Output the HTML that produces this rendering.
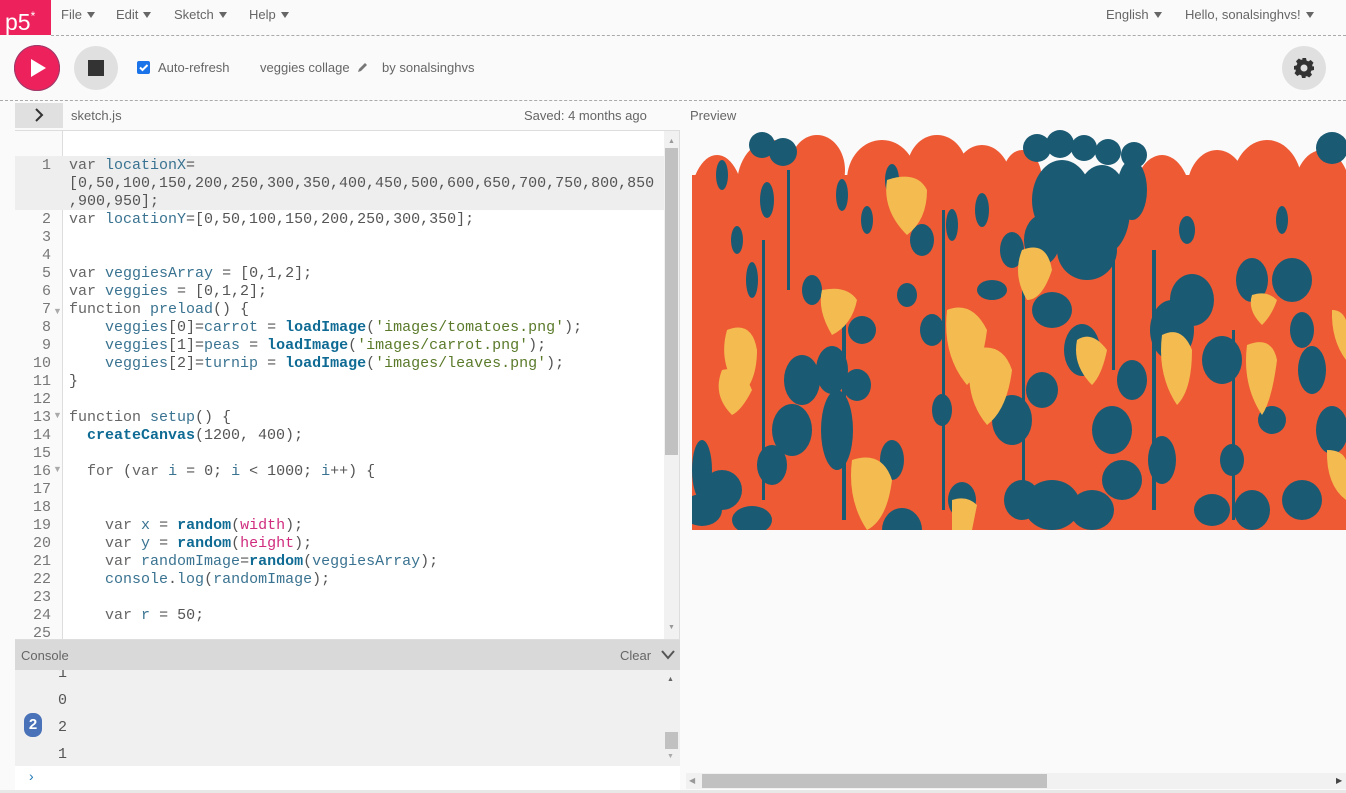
<!DOCTYPE html>
<html><head><meta charset="utf-8">
<style>
*{margin:0;padding:0;box-sizing:border-box}
body{width:1346px;height:793px;overflow:hidden;background:#fafafa;font-family:"Liberation Sans",sans-serif;color:#666;position:relative}
.a{position:absolute}
.nav{font-size:13px;color:#666}
.tri{display:inline-block;width:0;height:0;border-left:4px solid transparent;border-right:4px solid transparent;border-top:6px solid #666;margin-left:5px;vertical-align:1px}
.dash{border-top:1px dashed #aaa;height:0}
.code{font-family:"Liberation Mono",monospace;font-size:15px;line-height:18px;white-space:pre;color:#555}
.k{color:#666}.v{color:#3a7391}.f{color:#0f6b94;font-weight:bold}.s{color:#5a7a2a}.p{color:#d02c7e}
.gut{font-family:"Liberation Mono",monospace;font-size:15px;line-height:18px;color:#777;text-align:right;white-space:pre}
</style></head><body>
<div class="a" style="left:0;top:0;width:51px;height:35px;background:#ed225d;color:#fff;font-size:23px;line-height:33px;padding-left:5px">p5<sup style="font-size:12px;vertical-align:10px">*</sup></div>
<div class="a nav" style="left:61px;top:7px">File<span class="tri"></span></div>
<div class="a nav" style="left:116px;top:7px">Edit<span class="tri"></span></div>
<div class="a nav" style="left:174px;top:7px">Sketch<span class="tri"></span></div>
<div class="a nav" style="left:249px;top:7px">Help<span class="tri"></span></div>
<div class="a nav" style="left:1106px;top:7px">English<span class="tri"></span></div>
<div class="a nav" style="left:1185px;top:7px">Hello, sonalsinghvs!<span class="tri"></span></div>
<div class="a dash" style="left:51px;top:35px;width:1295px"></div>
<div class="a" style="left:14px;top:45px;width:46px;height:46px;border-radius:50%;background:#ed225d;box-shadow:0 0 0 1px #9a3b6a inset"></div>
<div class="a" style="left:31px;top:59px;width:0;height:0;border-top:9px solid transparent;border-bottom:9px solid transparent;border-left:15px solid #fff"></div>
<div class="a" style="left:74px;top:46px;width:44px;height:44px;border-radius:50%;background:#e0e0e0"></div>
<div class="a" style="left:88px;top:60px;width:16px;height:16px;background:#333"></div>
<div class="a" style="left:137px;top:61px;width:13px;height:13px;border-radius:2px;background:#1a73e8"></div>
<svg class="a" style="left:137px;top:61px" width="13" height="13"><path d="M3 6.5l2.5 2.5 5-5" stroke="#fff" stroke-width="2" fill="none"/></svg>
<div class="a nav" style="left:158px;top:60px">Auto-refresh</div>
<div class="a nav" style="left:260px;top:60px">veggies collage</div>
<svg class="a" style="left:357px;top:62px" width="11" height="11"><path d="M1 10l1-3 6-6 2 2-6 6z" fill="#777"/></svg>
<div class="a nav" style="left:382px;top:60px">by sonalsinghvs</div>
<div class="a" style="left:1282px;top:46px;width:44px;height:44px;border-radius:50%;background:#e0e0e0"></div>
<svg class="a" style="left:1292px;top:56px" width="24" height="24" viewBox="0 0 24 24"><path fill="#333" d="M10 2h4l.6 2.6 1.8.8 2.3-1.4 2.8 2.8-1.4 2.3.8 1.8L22 10v4l-2.6.6-.8 1.8 1.4 2.3-2.8 2.8-2.3-1.4-1.8.8L14 22h-4l-.6-2.6-1.8-.8-2.3 1.4-2.8-2.8 1.4-2.3-.8-1.8L2 14v-4l2.6-.6.8-1.8-1.4-2.3 2.8-2.8 2.3 1.4 1.8-.8z M12 8.5a3.5 3.5 0 1 0 0 7a3.5 3.5 0 1 0 0-7z" fill-rule="evenodd"/></svg>
<div class="a dash" style="left:0;top:100px;width:1346px"></div>
<div class="a" style="left:15px;top:103px;width:48px;height:25px;background:#e0e0e0"></div>
<svg class="a" style="left:33px;top:108px" width="12" height="14"><path d="M3 1l6 6-6 6" stroke="#333" stroke-width="2" fill="none"/></svg>
<div class="a nav" style="left:71px;top:108px">sketch.js</div>
<div class="a nav" style="left:524px;top:108px">Saved: 4 months ago</div>
<div class="a nav" style="left:690px;top:108px">Preview</div>
<div class="a" style="left:15px;top:130px;width:665px;height:510px;background:#fff;border:1px solid #ddd"></div>
<div class="a" style="left:15px;top:131px;width:48px;height:508px;background:#fafafa;border-right:1px solid #ddd"></div>
<div class="a" style="left:15px;top:156px;width:649px;height:54px;background:#eee"></div>
<div class="a gut" style="left:15px;top:157px;width:36px">1


2
3
4
5
6
7
8
9
10
11
12
13
14
15
16
17
18
19
20
21
22
23
24
25</div>
<div class="a" style="left:53px;top:302px;color:#aaa;font-size:9px;line-height:18px">▼</div>
<div class="a" style="left:53px;top:410px;color:#aaa;font-size:9px">▼</div>
<div class="a" style="left:53px;top:464px;color:#aaa;font-size:9px">▼</div>
<div class="a code" style="left:69px;top:157px;width:595px;height:482px;overflow:hidden"><span class="k">var</span> <span class="v">locationX</span>=
[0,50,100,150,200,250,300,350,400,450,500,600,650,700,750,800,850
,900,950];
<span class="k">var</span> <span class="v">locationY</span>=[0,50,100,150,200,250,300,350];


<span class="k">var</span> <span class="v">veggiesArray</span> = [0,1,2];
<span class="k">var</span> <span class="v">veggies</span> = [0,1,2];
<span class="k">function</span> <span class="v">preload</span>() {
    <span class="v">veggies</span>[0]=<span class="v">carrot</span> = <span class="f">loadImage</span>(<span class="s">'images/tomatoes.png'</span>);
    <span class="v">veggies</span>[1]=<span class="v">peas</span> = <span class="f">loadImage</span>(<span class="s">'images/carrot.png'</span>);
    <span class="v">veggies</span>[2]=<span class="v">turnip</span> = <span class="f">loadImage</span>(<span class="s">'images/leaves.png'</span>);
}

<span class="k">function</span> <span class="v">setup</span>() {
  <span class="f">createCanvas</span>(1200, 400);

  <span class="k">for</span> (<span class="k">var</span> <span class="v">i</span> = 0; <span class="v">i</span> &lt; 1000; <span class="v">i</span>++) {


    <span class="k">var</span> <span class="v">x</span> = <span class="f">random</span>(<span class="p">width</span>);
    <span class="k">var</span> <span class="v">y</span> = <span class="f">random</span>(<span class="p">height</span>);
    <span class="k">var</span> <span class="v">randomImage</span>=<span class="f">random</span>(<span class="v">veggiesArray</span>);
    <span class="v">console</span>.<span class="v">log</span>(<span class="v">randomImage</span>);

    <span class="k">var</span> <span class="v">r</span> = 50;</div>
<div class="a" style="left:664px;top:131px;width:15px;height:508px;background:#f1f1f1"></div>
<div class="a" style="left:665px;top:148px;width:13px;height:307px;background:#c1c1c1"></div>
<div class="a" style="left:668px;top:138px;color:#999;font-size:7px">▲</div>
<div class="a" style="left:668px;top:624px;color:#999;font-size:7px">▼</div>
<div class="a" style="left:15px;top:640px;width:665px;height:30px;background:#d9d9d9"></div>
<div class="a nav" style="left:21px;top:648px">Console</div>
<div class="a nav" style="left:620px;top:648px">Clear</div>
<svg class="a" style="left:660px;top:649px" width="16" height="12"><path d="M2 2l6 7 6-7" stroke="#555" stroke-width="2" fill="none"/></svg>
<div class="a" style="left:15px;top:670px;width:665px;height:96px;background:#f0f0f0;overflow:hidden"></div>
<div class="a code" style="left:58px;top:660px;color:#555;font-size:15px;line-height:27px">1
0
2
1</div>
<div class="a" style="left:15px;top:664px;width:665px;height:6px;background:#d9d9d9"></div>
<div class="a" style="left:24px;top:713px;width:18px;height:24px;border-radius:8px;background:#4a72b8;color:#fff;font-weight:bold;font-size:15px;text-align:center;line-height:24px">2</div>
<div class="a" style="left:665px;top:732px;width:13px;height:17px;background:#c1c1c1"></div>
<div class="a" style="left:667px;top:676px;color:#666;font-size:7px">▲</div>
<div class="a" style="left:667px;top:753px;color:#aaa;font-size:7px">▼</div>
<div class="a" style="left:15px;top:766px;width:665px;height:24px;background:#fff"></div>
<div class="a" style="left:29px;top:768px;color:#1f77b4;font-size:14px">›</div>
<div class="a" style="left:0;top:790px;width:1346px;height:3px;background:#e8e8e8"></div>
<div class="a" style="left:686px;top:773px;width:660px;height:16px;background:#f1f1f1"></div>
<div class="a" style="left:702px;top:774px;width:345px;height:14px;background:#c1c1c1"></div>
<div class="a" style="left:689px;top:776px;color:#999;font-size:8px">◀</div>
<div class="a" style="left:1336px;top:776px;color:#444;font-size:8px">▶</div>
<svg class="a" style="left:692px;top:130px" width="654" height="400" viewBox="0 0 654 400">
<rect x="0" y="45" width="654" height="355" fill="#ee5a34"/>
<g fill="#ee5a34">
<ellipse cx="25" cy="80" rx="28" ry="55"/><ellipse cx="80" cy="55" rx="35" ry="45"/><ellipse cx="125" cy="40" rx="28" ry="35"/><ellipse cx="190" cy="50" rx="35" ry="40"/><ellipse cx="245" cy="40" rx="30" ry="35"/><ellipse cx="290" cy="55" rx="30" ry="40"/><ellipse cx="470" cy="75" rx="30" ry="50"/><ellipse cx="525" cy="60" rx="30" ry="40"/><ellipse cx="575" cy="55" rx="35" ry="45"/><ellipse cx="630" cy="70" rx="30" ry="50"/><ellipse cx="330" cy="50" rx="20" ry="30"/></g>
<g fill="#1b5a73">
<circle cx="70" cy="15" r="13"/><circle cx="91" cy="22" r="14"/><circle cx="345" cy="18" r="14"/><circle cx="368" cy="14" r="14"/><circle cx="392" cy="18" r="13"/><circle cx="416" cy="22" r="13"/><circle cx="442" cy="25" r="13"/><circle cx="640" cy="18" r="16"/>
<ellipse cx="370" cy="70" rx="30" ry="40"/><ellipse cx="410" cy="80" rx="28" ry="45"/><ellipse cx="395" cy="120" rx="30" ry="30"/><ellipse cx="440" cy="60" rx="15" ry="30"/><ellipse cx="350" cy="110" rx="18" ry="25"/>
<ellipse cx="30" cy="45" rx="6" ry="15"/><ellipse cx="60" cy="150" rx="6" ry="18"/><ellipse cx="75" cy="70" rx="7" ry="18"/><ellipse cx="150" cy="65" rx="6" ry="16"/><ellipse cx="200" cy="50" rx="7" ry="16"/><ellipse cx="260" cy="95" rx="6" ry="16"/><ellipse cx="290" cy="80" rx="7" ry="17"/><ellipse cx="230" cy="110" rx="12" ry="16"/><ellipse cx="320" cy="120" rx="12" ry="18"/><ellipse cx="300" cy="160" rx="15" ry="10"/>
<ellipse cx="110" cy="250" rx="18" ry="25"/><ellipse cx="140" cy="240" rx="16" ry="24"/><ellipse cx="165" cy="255" rx="14" ry="16"/><ellipse cx="100" cy="300" rx="20" ry="26"/><ellipse cx="145" cy="300" rx="16" ry="40"/><ellipse cx="80" cy="335" rx="15" ry="20"/><ellipse cx="30" cy="360" rx="20" ry="20"/><ellipse cx="10" cy="380" rx="20" ry="16"/><ellipse cx="60" cy="390" rx="20" ry="14"/>
<ellipse cx="210" cy="400" rx="20" ry="22"/><ellipse cx="270" cy="370" rx="14" ry="18"/><ellipse cx="200" cy="330" rx="12" ry="20"/><ellipse cx="250" cy="280" rx="10" ry="16"/>
<ellipse cx="320" cy="290" rx="20" ry="25"/><ellipse cx="350" cy="260" rx="16" ry="18"/><ellipse cx="390" cy="220" rx="18" ry="26"/><ellipse cx="360" cy="180" rx="20" ry="18"/><ellipse cx="420" cy="300" rx="20" ry="24"/><ellipse cx="440" cy="250" rx="15" ry="20"/><ellipse cx="330" cy="370" rx="18" ry="20"/><ellipse cx="360" cy="375" rx="28" ry="25"/><ellipse cx="400" cy="380" rx="22" ry="20"/><ellipse cx="430" cy="350" rx="20" ry="20"/>
<ellipse cx="480" cy="200" rx="22" ry="30"/><ellipse cx="500" cy="170" rx="22" ry="26"/><ellipse cx="530" cy="230" rx="20" ry="24"/><ellipse cx="560" cy="150" rx="16" ry="22"/><ellipse cx="600" cy="150" rx="20" ry="22"/><ellipse cx="620" cy="240" rx="14" ry="24"/><ellipse cx="640" cy="300" rx="16" ry="24"/><ellipse cx="560" cy="380" rx="18" ry="20"/><ellipse cx="520" cy="380" rx="18" ry="16"/><ellipse cx="610" cy="370" rx="20" ry="20"/><ellipse cx="470" cy="330" rx="14" ry="24"/>
<ellipse cx="120" cy="160" rx="10" ry="15"/><ellipse cx="170" cy="200" rx="14" ry="14"/><ellipse cx="10" cy="340" rx="10" ry="30"/><ellipse cx="240" cy="200" rx="12" ry="16"/><ellipse cx="580" cy="290" rx="14" ry="14"/>
<ellipse cx="45" cy="110" rx="6" ry="14"/><ellipse cx="175" cy="90" rx="6" ry="14"/><ellipse cx="215" cy="165" rx="10" ry="12"/><ellipse cx="280" cy="210" rx="8" ry="14"/><ellipse cx="495" cy="100" rx="8" ry="14"/><ellipse cx="590" cy="90" rx="6" ry="14"/><ellipse cx="610" cy="200" rx="12" ry="18"/><ellipse cx="50" cy="230" rx="14" ry="18"/><ellipse cx="540" cy="330" rx="12" ry="16"/>
<rect x="70" y="110" width="3" height="260"/><rect x="150" y="190" width="4" height="200"/><rect x="250" y="80" width="3" height="300"/><rect x="330" y="140" width="3" height="240"/><rect x="460" y="120" width="4" height="260"/><rect x="540" y="200" width="3" height="190"/><rect x="420" y="40" width="3" height="200"/><rect x="95" y="40" width="3" height="120"/>
</g>
<g fill="#f4bb50">
<path d="M195 50 q30 -10 40 10 q0 30 -20 45 q-25 -25 -20 -55z"/>
<path d="M330 120 q25 -10 30 20 q-10 30 -25 30 q-15 -25 -5 -50z"/>
<path d="M130 160 q25 -5 35 10 q-5 25 -25 35 q-15 -25 -10 -45z"/>
<path d="M35 200 q25 -10 30 20 q0 30 -15 45 q-25 -30 -15 -65z"/>
<path d="M30 240 q20 -5 30 20 q-10 20 -20 25 q-20 -20 -10 -45z"/>
<path d="M255 180 q25 -10 40 20 q-5 40 -20 55 q-25 -30 -20 -75z"/>
<path d="M280 220 q30 -10 40 20 q-5 40 -25 55 q-25 -30 -15 -75z"/>
<path d="M385 210 q15 -10 30 10 q-5 25 -15 35 q-20 -20 -15 -45z"/>
<path d="M470 205 q20 -10 30 15 q0 40 -15 55 q-20 -30 -15 -70z"/>
<path d="M555 215 q25 -10 30 15 q-5 40 -15 55 q-20 -30 -15 -70z"/>
<path d="M160 330 q30 -10 40 20 q-5 40 -25 50 q-20 -30 -15 -70z"/>
<path d="M560 165 q15 -5 25 5 q-5 15 -15 25 q-15 -15 -10 -30z"/>
<path d="M640 180 q10 0 14 10 l0 40 q-15 -20 -14 -50z"/>
<path d="M635 320 q15 0 19 10 l0 40 q-20 -15 -19 -50z"/>
<path d="M260 370 q15 -5 25 5 l-5 25 h-20z"/>
</g>
</svg>
</body></html>
